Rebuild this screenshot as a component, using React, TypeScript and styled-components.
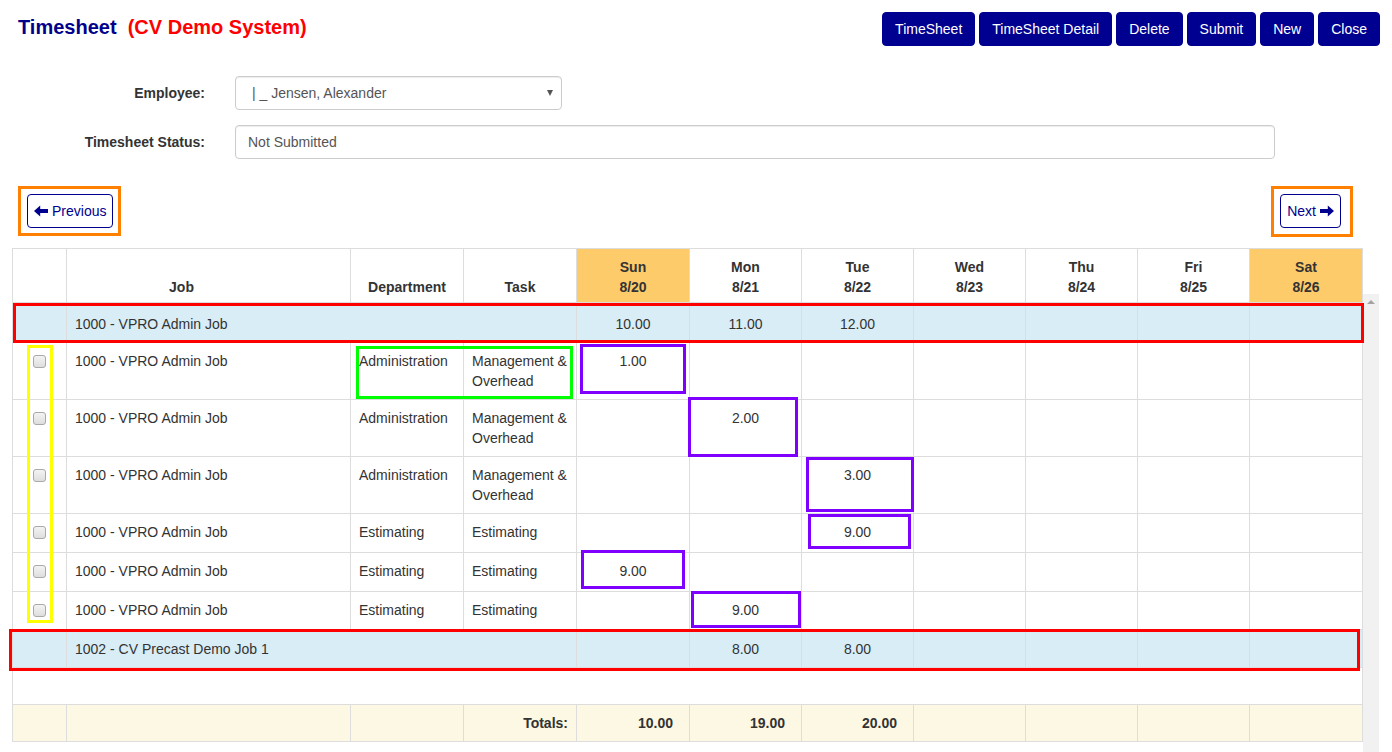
import React from "react";
import styled, { createGlobalStyle, css } from "styled-components";

const GlobalStyle = createGlobalStyle`
  html, body {
    margin: 0;
    padding: 0;
    overflow: hidden;
    background: #ffffff;
  }
  body {
    font-family: "Liberation Sans", Arial, Helvetica, sans-serif;
    font-size: 14px;
    line-height: 20px;
    color: #333333;
  }
  * { box-sizing: border-box; }
`;

const NAVY = "#000090";

const Page = styled.div`
  position: relative;
  width: 1392px;
  height: 752px;
  padding: 12px 12px 0 12px;
  overflow: hidden;
`;

const TopBar = styled.div`
  display: flex;
  justify-content: space-between;
  align-items: center;
  height: 34px;
`;

const Title = styled.h1`
  margin: 0 0 4px 0;
  padding-left: 6px;
  font-size: 20px;
  line-height: 23px;
  font-weight: bold;
  color: #00008b;
  white-space: pre;
`;

const SubTitle = styled.span`
  color: #ff0000;
`;

const Toolbar = styled.div`
  display: flex;
  gap: 4px;
`;

const ToolButton = styled.button`
  font-family: inherit;
  font-size: 14px;
  line-height: 20px;
  padding: 6px 12px;
  border: 1px solid ${NAVY};
  border-radius: 4px;
  background: ${NAVY};
  color: #ffffff;
  cursor: pointer;
`;

const Form = styled.div`
  margin-top: 30px;
  display: flex;
  flex-direction: column;
  gap: 15px;
`;

const FormRow = styled.div`
  display: grid;
  grid-template-columns: 208px 1fr;
  align-items: center;
`;

const Label = styled.label`
  text-align: right;
  padding-right: 15px;
  font-weight: bold;
  color: #333;
`;

const controlBase = css`
  height: 34px;
  margin-left: 15px;
  border: 1px solid #cccccc;
  border-radius: 4px;
  box-shadow: inset 0 1px 1px rgba(0, 0, 0, 0.075);
  color: #555555;
  background: #ffffff;
  display: flex;
  align-items: center;
`;

const SelectBox = styled.div`
  ${controlBase};
  width: 327px;
  padding: 6px 8px 6px 16px;
  justify-content: space-between;
`;

const SelectArrow = styled.span`
  width: 0;
  height: 0;
  border-left: 3.5px solid transparent;
  border-right: 3.5px solid transparent;
  border-top: 6px solid #555555;
`;

const TextBox = styled.div`
  ${controlBase};
  width: 1040px;
  padding: 6px 12px;
`;

const NavRow = styled.div`
  margin-top: 35px;
  display: flex;
  justify-content: space-between;
  padding: 0 39px 0 15px;
`;

const NavButton = styled.button`
  font-family: inherit;
  font-size: 14px;
  line-height: 20px;
  height: 34px;
  padding: 6px;
  border: 1px solid ${NAVY};
  border-radius: 4px;
  background: #ffffff;
  color: ${NAVY};
  display: inline-flex;
  align-items: center;
  gap: 4px;
  cursor: pointer;
`;

const TableArea = styled.div`
  margin-top: 20px;
  display: flex;
  align-items: flex-start;
`;

const Grid = styled.table`
  width: 1350px;
  table-layout: fixed;
  border-collapse: collapse;
  border: 1px solid #dddddd;
`;

const HeadCell = styled.th<{ $weekend?: boolean; $shift?: number }>`
  border: 1px solid #dddddd;
  border-bottom: 2px solid #dddddd;
  padding: 8px ${(p) => 8 + (p.$shift || 0)}px 5px 8px;
  vertical-align: bottom;
  text-align: center;
  font-weight: bold;
  line-height: 20px;
  color: #333;
  background: ${(p) => (p.$weekend ? "#fecb6b" : "#ffffff")};
`;

const GroupRow = styled.tr``;

const GroupCell = styled.td<{ $top?: number }>`
  background: #d9edf7;
  border: 1px solid #dddddd;
  padding: ${(p) => p.$top ?? 10}px 8px 8px 8px;
  line-height: 20px;
  text-align: ${(p) => (p.align === "left" ? "left" : "center")};
`;

const DataCell = styled.td<{ $bottom?: number; $center?: boolean }>`
  border: 1px solid #dddddd;
  padding: 8px 8px ${(p) => p.$bottom ?? 8}px 8px;
  line-height: 20px;
  vertical-align: top;
  text-align: ${(p) => (p.$center ? "center" : "left")};
`;

const Check = styled.input`
  appearance: none;
  -webkit-appearance: none;
  display: block;
  margin: 4px auto 0;
  width: 13px;
  height: 13px;
  border: 1px solid #a9a9a9;
  border-radius: 3px;
  background: linear-gradient(#f3f3f3, #dedede);
`;

const SpacerCell = styled.td`
  height: 37px;
  padding: 0;
  border: none;
`;

const TotalCell = styled.td<{ $label?: boolean }>`
  background: #fcf8e3;
  border: 1px solid #dddddd;
  padding: 8px ${(p) => (p.$label ? 8 : 16)}px 8px 8px;
  line-height: 20px;
  font-weight: bold;
  text-align: right;
`;

const Scrollbar = styled.div`
  width: 16px;
  height: 520px;
  margin-top: 46px;
  background: #f1f1f1;
  display: flex;
  justify-content: center;
  padding-top: 6px;
`;

const ScrollArrow = styled.span`
  width: 0;
  height: 0;
  border-left: 4px solid transparent;
  border-right: 4px solid transparent;
  border-bottom: 4px solid #a3a3a3;
`;

const Mark = styled.div<{ $color: string }>`
  position: absolute;
  border: 3px solid ${(p) => p.$color};
  pointer-events: none;
`;

const Arrow = ({ dir }: { dir: "left" | "right" }) => (
  <svg width="14" height="12" viewBox="0 0 14 12" aria-hidden="true">
    <polygon
      fill={NAVY}
      points={
        dir === "left"
          ? "0,6 6.2,0.4 6.2,4 14,4 14,8 6.2,8 6.2,11.6"
          : "14,6 7.8,0.4 7.8,4 0,4 0,8 7.8,8 7.8,11.6"
      }
    />
  </svg>
);

const days = [
  { d: "Sun", date: "8/20", weekend: true },
  { d: "Mon", date: "8/21" },
  { d: "Tue", date: "8/22" },
  { d: "Wed", date: "8/23" },
  { d: "Thu", date: "8/24" },
  { d: "Fri", date: "8/25" },
  { d: "Sat", date: "8/26", weekend: true },
];

const colWidths = [54, 284, 113, 113, 113, 112, 112, 112, 112, 112, 113];

type Line = { dept: string; task: string; day: number; hours: string; twoLine: boolean };

const lines: Line[] = [
  { dept: "Administration", task: "Management & Overhead", day: 0, hours: "1.00", twoLine: true },
  { dept: "Administration", task: "Management & Overhead", day: 1, hours: "2.00", twoLine: true },
  { dept: "Administration", task: "Management & Overhead", day: 2, hours: "3.00", twoLine: true },
  { dept: "Estimating", task: "Estimating", day: 2, hours: "9.00", twoLine: false },
  { dept: "Estimating", task: "Estimating", day: 0, hours: "9.00", twoLine: false },
  { dept: "Estimating", task: "Estimating", day: 1, hours: "9.00", twoLine: false },
];

const groups = [
  { job: "1000 - VPRO Admin Job", totals: ["10.00", "11.00", "12.00", "", "", "", ""], top: 10 },
  { job: "1002 - CV Precast Demo Job 1", totals: ["", "8.00", "8.00", "", "", "", ""], top: 9 },
];

const totals = ["10.00", "19.00", "20.00", "", "", "", ""];

const marks = [
  { x: 18, y: 186, w: 103, h: 50, c: "#ff8000" },
  { x: 1271, y: 186, w: 82, h: 51, c: "#ff8000" },
  { x: 13, y: 303, w: 1351, h: 40, c: "#ff0000" },
  { x: 9, y: 629, w: 1351, h: 42, c: "#ff0000" },
  { x: 27, y: 345, w: 26, h: 278, c: "#ffff00" },
  { x: 356, y: 346, w: 217, h: 53, c: "#00ff00" },
  { x: 580, y: 344, w: 106, h: 50, c: "#8000ff" },
  { x: 688, y: 397, w: 110, h: 60, c: "#8000ff" },
  { x: 806, y: 457, w: 108, h: 55, c: "#8000ff" },
  { x: 808, y: 514, w: 103, h: 35, c: "#8000ff" },
  { x: 581, y: 550, w: 104, h: 39, c: "#8000ff" },
  { x: 691, y: 591, w: 110, h: 37, c: "#8000ff" },
];

export default function App() {
  return (
    <>
      <GlobalStyle />
      <Page>
        <TopBar>
          <Title>
            {"Timesheet  "}
            <SubTitle>(CV Demo System)</SubTitle>
          </Title>
          <Toolbar>
            {["TimeSheet", "TimeSheet Detail", "Delete", "Submit", "New", "Close"].map((b) => (
              <ToolButton key={b}>{b}</ToolButton>
            ))}
          </Toolbar>
        </TopBar>

        <Form>
          <FormRow>
            <Label>Employee:</Label>
            <SelectBox>
              <span>| _ Jensen, Alexander</span>
              <SelectArrow />
            </SelectBox>
          </FormRow>
          <FormRow>
            <Label>Timesheet Status:</Label>
            <TextBox>Not Submitted</TextBox>
          </FormRow>
        </Form>

        <NavRow>
          <NavButton>
            <Arrow dir="left" />
            Previous
          </NavButton>
          <NavButton>
            Next
            <Arrow dir="right" />
          </NavButton>
        </NavRow>

        <TableArea>
          <Grid>
            <colgroup>
              {colWidths.map((w, i) => (
                <col key={i} style={{ width: w }} />
              ))}
            </colgroup>
            <thead>
              <tr>
                <HeadCell />
                <HeadCell $shift={54}>Job</HeadCell>
                <HeadCell>Department</HeadCell>
                <HeadCell>Task</HeadCell>
                {days.map((d) => (
                  <HeadCell key={d.d} $weekend={d.weekend}>
                    {d.d}
                    <br />
                    {d.date}
                  </HeadCell>
                ))}
              </tr>
            </thead>
            <tbody>
              <GroupRow>
                <GroupCell />
                <GroupCell colSpan={3} align="left" $top={groups[0].top}>
                  {groups[0].job}
                </GroupCell>
                {groups[0].totals.map((t, i) => (
                  <GroupCell key={i} $top={groups[0].top}>
                    {t}
                  </GroupCell>
                ))}
              </GroupRow>
              {lines.map((l, idx) => {
                const bottom = l.twoLine ? 8 : idx === lines.length - 1 ? 9 : 10;
                return (
                  <tr key={idx}>
                    <DataCell $bottom={bottom}>
                      <Check type="checkbox" />
                    </DataCell>
                    <DataCell $bottom={bottom}>1000 - VPRO Admin Job</DataCell>
                    <DataCell $bottom={bottom}>{l.dept}</DataCell>
                    <DataCell $bottom={bottom}>
                      {l.twoLine ? (
                        <>
                          Management &amp;
                          <br />
                          Overhead
                        </>
                      ) : (
                        l.task
                      )}
                    </DataCell>
                    {days.map((_, di) => (
                      <DataCell key={di} $bottom={bottom} $center>
                        {di === l.day ? l.hours : ""}
                      </DataCell>
                    ))}
                  </tr>
                );
              })}
              <GroupRow>
                <GroupCell $top={groups[1].top} />
                <GroupCell colSpan={3} align="left" $top={groups[1].top}>
                  {groups[1].job}
                </GroupCell>
                {groups[1].totals.map((t, i) => (
                  <GroupCell key={i} $top={groups[1].top}>
                    {t}
                  </GroupCell>
                ))}
              </GroupRow>
              <tr>
                <SpacerCell colSpan={11} />
              </tr>
              <tr>
                <TotalCell />
                <TotalCell />
                <TotalCell />
                <TotalCell $label>Totals:</TotalCell>
                {totals.map((t, i) => (
                  <TotalCell key={i}>{t}</TotalCell>
                ))}
              </tr>
            </tbody>
          </Grid>
          <Scrollbar>
            <ScrollArrow />
          </Scrollbar>
        </TableArea>

        {marks.map((m, i) => (
          <Mark
            key={i}
            $color={m.c}
            style={{ left: m.x, top: m.y, width: m.w, height: m.h }}
          />
        ))}
      </Page>
    </>
  );
}
